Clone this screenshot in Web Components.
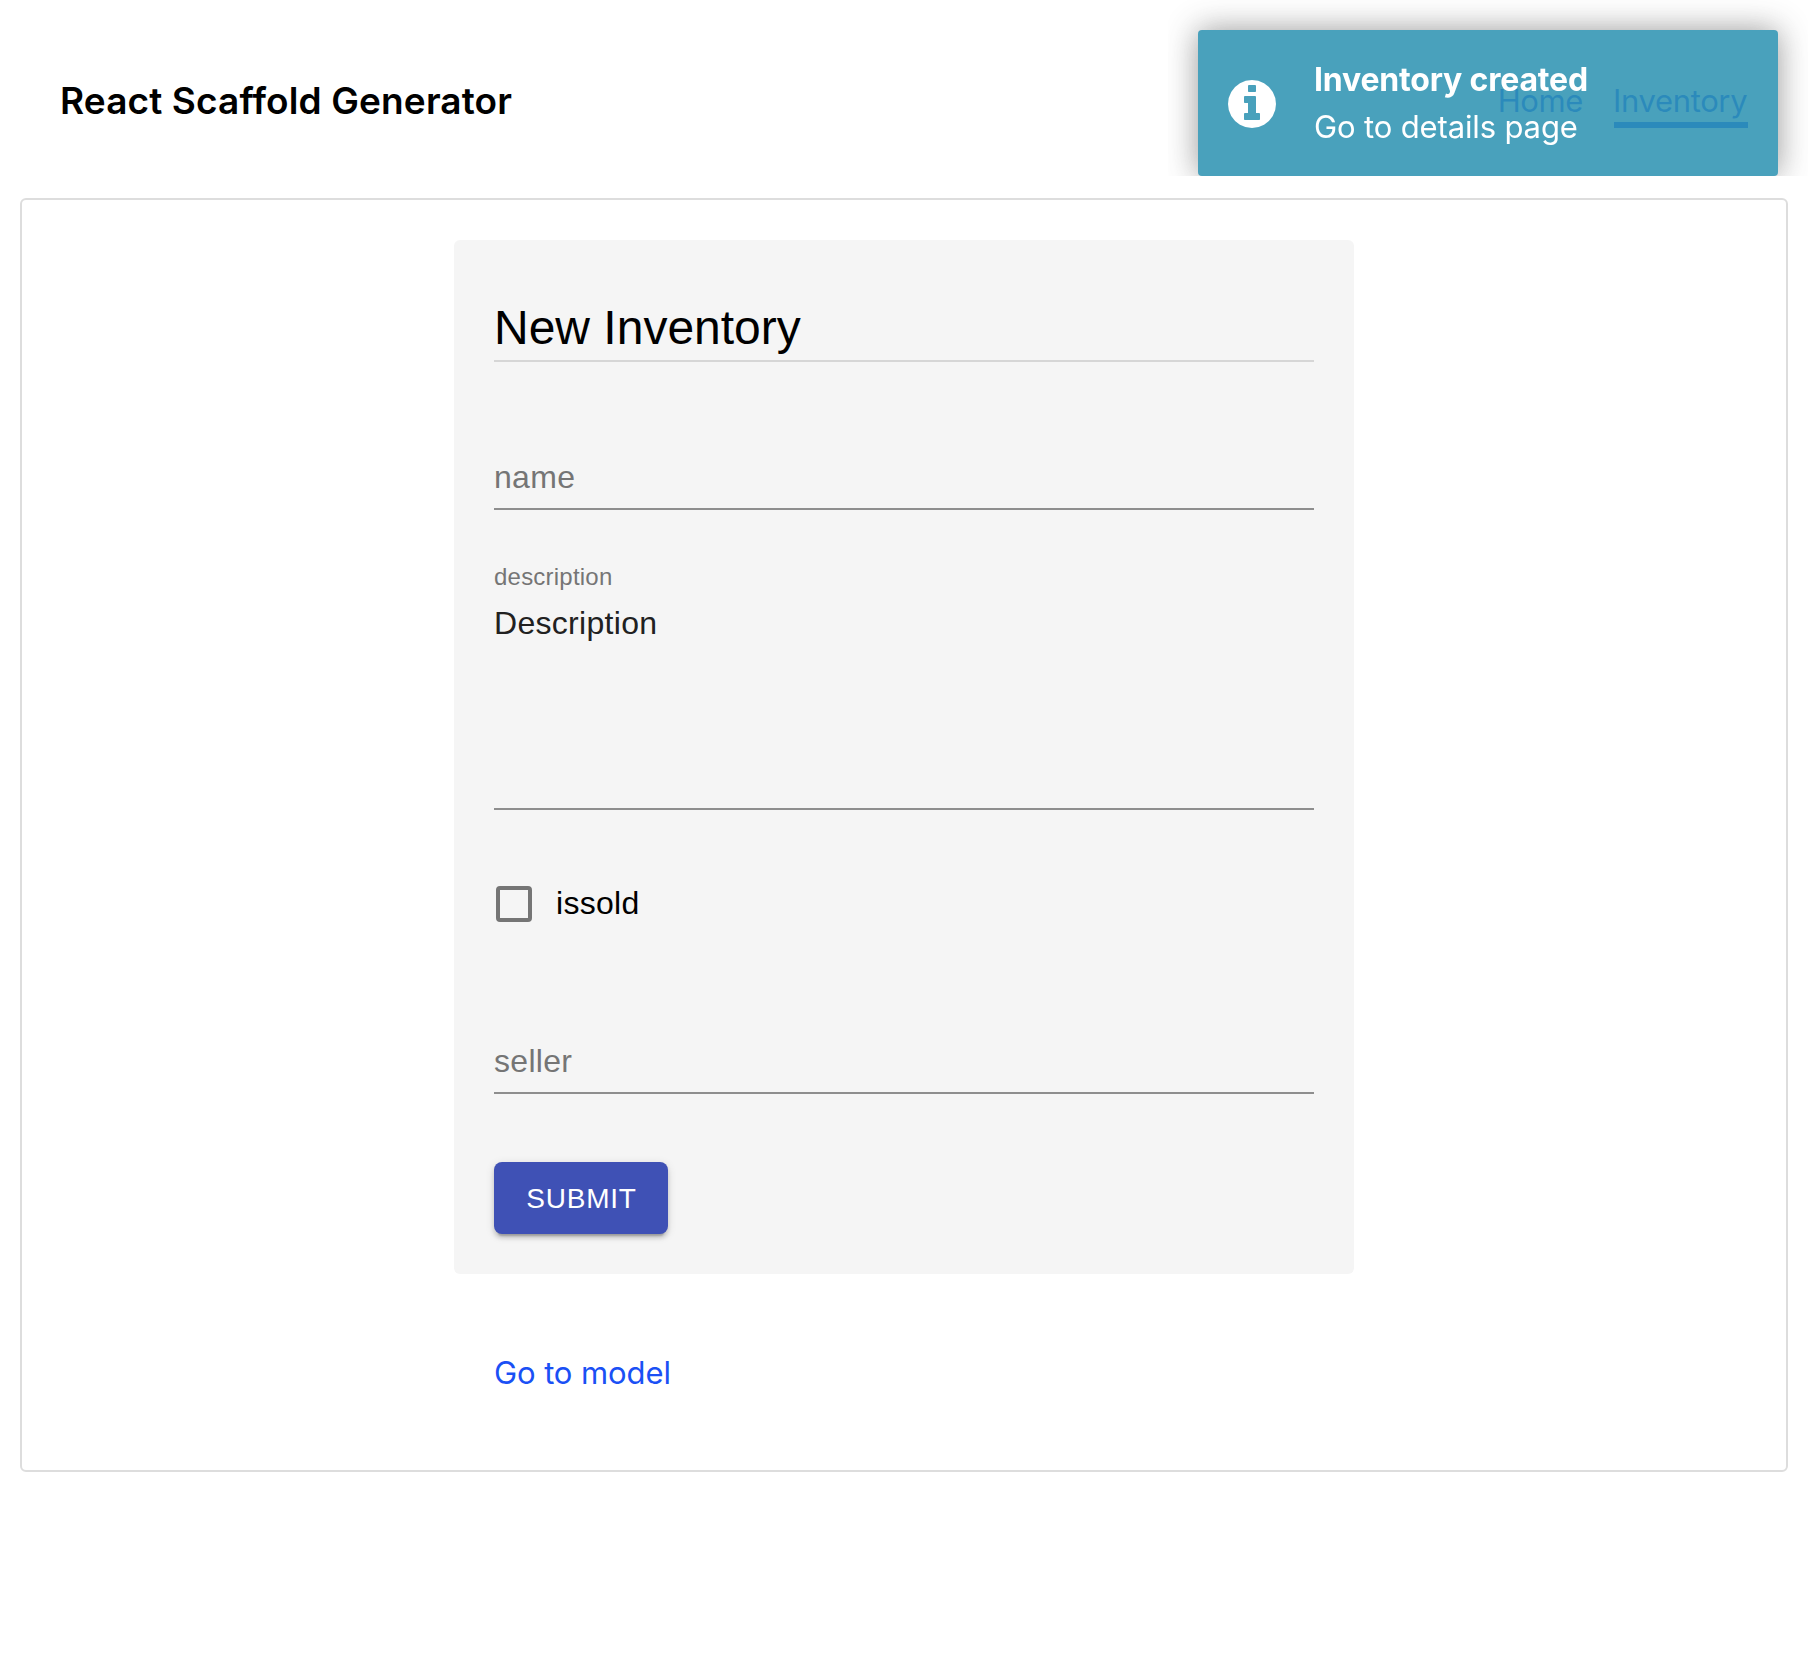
<!DOCTYPE html>
<html lang="en">
<head>
<meta charset="utf-8">
<title>React Scaffold Generator</title>
<style>
  html, body { margin: 0; background: #fff; }
  body { font-family: Inter, "Noto Sans", sans-serif; color: #000; min-height: 1658px; }
</style>
</head>
<body>
<app-shell>
  <app-header slot="header" heading="React Scaffold Generator">
    <nav-link>Home</nav-link>
    <nav-link active>Inventory</nav-link>
  </app-header>
  <form-card heading="New Inventory">
    <text-field label="name"></text-field>
    <text-field label="description" multiline>Description</text-field>
    <check-field>issold</check-field>
    <text-field class="last" label="seller"></text-field>
    <submit-button>SUBMIT</submit-button>
  </form-card>
  <model-link>Go to model</model-link>
  <toast-note slot="toast" heading="Inventory created">Go to details page</toast-note>
</app-shell>

<script>
function define(name, render) {
  customElements.define(name, class extends HTMLElement {
    constructor() {
      super();
      const t = document.createElement('template');
      t.innerHTML = render(this);
      this.attachShadow({ mode: 'open' }).append(t.content.cloneNode(true));
    }
  });
}

define('app-shell', () => `
  <style>
    :host { display: flex; flex-direction: column; }
    main { box-sizing: border-box; height: 1274px; margin: 0 20px; padding-top: 40px; border: 2px solid #ddd; border-radius: 6px;
      display: flex; flex-direction: column; align-items: center; }
    .toasts { position: fixed; top: 0; right: 0; width: 640px; height: 176px; box-sizing: border-box; padding: 30px 30px 0; overflow: hidden; }
  </style>
  <slot name="header"></slot>
  <main><slot></slot></main>
  <div class="toasts"><slot name="toast"></slot></div>`);

define('app-header', el => `
  <style>
    :host { display: flex; justify-content: space-between; box-sizing: border-box; height: 198px; padding: 77px 60px 0; }
    h1 { margin: 0; font-size: 37px; line-height: 48px; font-weight: 600; letter-spacing: .13px; white-space: nowrap; }
    nav { display: flex; gap: 31px; padding-top: 2px; align-items: flex-start; }
  </style>
  <h1>${el.getAttribute('heading')}</h1>
  <nav><slot></slot></nav>`);

define('nav-link', () => `
  <style>
    :host { display: block; font-size: 31px; line-height: 43px; letter-spacing: -.4px; color: #1a50f5; border-bottom: 6px solid transparent; }
    :host([active]) { width: 134px; border-bottom-color: #1a50f5; letter-spacing: -.35px; text-indent: -1px; }
  </style>
  <slot></slot>`);

define('form-card', el => `
  <style>
    :host { display: flex; flex-direction: column; box-sizing: border-box; width: 900px; height: 1034px; padding: 40px; border-radius: 6px;
      background: #f5f5f5; font-family: "Liberation Sans", Arial, sans-serif; }
    h2 { margin: 0; padding: 20px 0 4px; font-size: 48px; line-height: 56px; font-weight: 400; border-bottom: 2px solid #d6d6d6; letter-spacing: 0; }
  </style>
  <h2>${el.getAttribute('heading')}</h2>
  <slot></slot>`);

define('text-field', el => el.hasAttribute('multiline') ? `
  <style>
    :host { display: flex; flex-direction: column; margin-top: 55px; border-bottom: 2px solid #8e8e8e; letter-spacing: .3px; }
    label { font-size: 24px; line-height: 24px; letter-spacing: .22px; color: #757575; }
    div { margin-top: 15px; height: 204px; font-size: 32px; line-height: 38px; color: #212121; }
  </style>
  <label>${el.getAttribute('label')}</label>
  <div><slot></slot></div>` : `
  <style>
    :host { display: block; margin-top: 96px; padding-bottom: 12px; border-bottom: 2px solid #8e8e8e; letter-spacing: .3px;
      font-size: 32px; line-height: 38px; color: #757575; }
    :host(.last) { margin-top: 120px; }
    label { display: block; }
  </style>
  <label>${el.getAttribute('label')}</label>`);

define('check-field', () => `
  <style>
    :host { display: flex; align-items: flex-start; gap: 24px; margin-top: 76px; padding-left: 2px; height: 36px;
      font-size: 32px; line-height: 34px; letter-spacing: .3px; }
    i { box-sizing: border-box; width: 36px; height: 36px; border: 4px solid #757575; border-radius: 4px; }
  </style>
  <i></i><span><slot></slot></span>`);

define('submit-button', () => `
  <style>
    :host { display: flex; align-items: center; justify-content: center; align-self: flex-start; box-sizing: border-box; margin-top: 68px;
      width: 174px; height: 72px; padding: 2px 0 0 1px;
      border-radius: 8px; background: #3f51b5; color: #fff; font-size: 28px; line-height: 48px; letter-spacing: .78px;
      box-shadow: 0 6px 2px -4px rgba(0,0,0,.2), 0 4px 4px 0 rgba(0,0,0,.14), 0 2px 10px 0 rgba(0,0,0,.12); }
  </style>
  <span><slot></slot></span>`);

define('model-link', () => `
  <style>
    :host { display: block; box-sizing: border-box; width: 900px; padding: 0 40px; margin-top: 79px; font-size: 31px; line-height: 40px;
      letter-spacing: -.1px; color: #1a50f5; }
  </style>
  <slot></slot>`);

define('toast-note', el => `
  <style>
    :host { display: flex; align-items: center; box-sizing: border-box; width: 580px; height: 146px; padding: 0 30px; gap: 38px;
      border-radius: 4px; background: #2f94b3; color: #fff; opacity: .87; box-shadow: 0 0 32px #888; }
    svg { width: 48px; height: 48px; margin-top: 2px; flex: none; }
    h4 { margin: 0; padding: 1px 0 9px; font-size: 32px; line-height: 38px; font-weight: 700; letter-spacing: -.18px; }
    p { margin: 0; font-size: 31px; line-height: 38px; letter-spacing: -.14px; }
  </style>
  <svg viewBox="128 128 1536 1536" fill="#fff"><path d="M1152 1376v-160q0-14-9-23t-23-9h-96v-512q0-14-9-23t-23-9h-320q-14 0-23 9t-9 23v160q0 14 9 23t23 9h96v320h-96q-14 0-23 9t-9 23v160q0 14 9 23t23 9h448q14 0 23-9t9-23zm-128-896v-160q0-14-9-23t-23-9h-192q-14 0-23 9t-9 23v160q0 14 9 23t23 9h192q14 0 23-9t9-23zm640 416q0 209-103 385.5t-279.5 279.5-385.5 103-385.5-103-279.5-279.5-103-385.5 103-385.5 279.5-279.5 385.5-103 385.5 103 279.5 279.5 103 385.5z"/></svg>
  <div><h4>${el.getAttribute('heading')}</h4><p><slot></slot></p></div>`);
</script>
</body>
</html>
